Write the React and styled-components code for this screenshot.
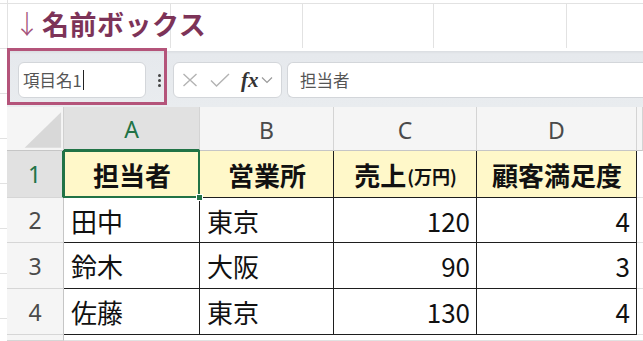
import React from 'react'
import styled, { createGlobalStyle } from 'styled-components'

const GlobalStyle = createGlobalStyle`
  html, body {
    margin: 0;
    padding: 0;
    background: #fff;
  }
  body {
    font-family: "Noto Sans CJK JP", "Noto Sans", sans-serif;
  }
`

const columns = ['A', 'B', 'C', 'D']

const rows = [
  { n: 2, cells: ['田中', '東京', '120', '4'] },
  { n: 3, cells: ['鈴木', '大阪', '90', '3'] },
  { n: 4, cells: ['佐藤', '東京', '130', '4'] },
]

const aligns = ['left', 'left', 'right', 'right']

function App() {
  return (
    <>
      <GlobalStyle />
      <Page>
        <TitleBar>
          <Arrow>↓</Arrow>
          <Title>名前ボックス</Title>
        </TitleBar>

        <Sheet>
          <FormulaBar>
            <Highlight>
              <NameBox>
                項目名1<Caret />
              </NameBox>
              <Dots>
                <i />
                <i />
                <i />
              </Dots>
            </Highlight>

            <FxGroup>
              <svg width="16" height="14" viewBox="0 0 16 14">
                <path d="M1.5 1 L14.5 13 M14.5 1 L1.5 13" stroke="#b3b3b3" strokeWidth="1.4" fill="none" />
              </svg>
              <svg width="20" height="14" viewBox="0 0 20 14">
                <path d="M1 7.5 L6.5 13 L19 1" stroke="#b3b3b3" strokeWidth="1.4" fill="none" />
              </svg>
              <FxText>fx</FxText>
              <svg width="12" height="8" viewBox="0 0 12 8">
                <path d="M1 1.5 L6 6.5 L11 1.5" stroke="#9a9a9a" strokeWidth="1.2" fill="none" />
              </svg>
            </FxGroup>

            <FormulaInput>担当者</FormulaInput>
          </FormulaBar>

          <Grid>
            <Corner>
              <svg width="57" height="44" viewBox="0 0 57 44">
                <polygon points="55,5 55,41 18,41" fill="#d8d8d8" />
              </svg>
            </Corner>
            {columns.map((c, i) => (
              <ColHead key={c} $active={i === 0}>{c}</ColHead>
            ))}
            <ColHead $blank />

            <RowHead $active>1</RowHead>
            <Cell $head $align="center" $selected>担当者</Cell>
            <Cell $head $align="center">営業所</Cell>
            <Cell $head $align="center">
              売上<Small>(万円)</Small>
            </Cell>
            <Cell $head $align="center">顧客満足度</Cell>
            <EmptyCell />

            {rows.map((r) => (
              <React.Fragment key={r.n}>
                <RowHead>{r.n}</RowHead>
                {r.cells.map((v, i) => (
                  <Cell key={i} $align={aligns[i]}>{v}</Cell>
                ))}
                <EmptyCell />
              </React.Fragment>
            ))}

            <RowHead />
            <EmptyCell />
            <EmptyCell />
            <EmptyCell />
            <EmptyCell />
            <EmptyCell />
          </Grid>
        </Sheet>
      </Page>
    </>
  )
}

export default App

const Page = styled.div`
  width: 643px;
  height: 341px;
  overflow: hidden;
  display: flex;
  flex-direction: column;
  background-color: #fff;
  background-image:
    repeating-linear-gradient(to bottom, transparent 0 3px, #e2e2e2 3px 4px, transparent 4px 45px),
    linear-gradient(to right, transparent 7px, #e2e2e2 7px 8px, transparent 8px);
`

const TitleBar = styled.div`
  height: 48px;
  flex-shrink: 0;
  display: flex;
  align-items: center;
  padding-left: 14px;
  box-sizing: border-box;
  padding-bottom: 2px;
  background-image:
    linear-gradient(to right, transparent 170px, #e2e2e2 170px 171px, transparent 171px),
    linear-gradient(to right, transparent 302px, #e2e2e2 302px 303px, transparent 303px),
    linear-gradient(to right, transparent 433px, #e2e2e2 433px 434px, transparent 434px),
    linear-gradient(to right, transparent 566px, #e2e2e2 566px 567px, transparent 567px);
  background-size: 100% 45px;
  background-position: 0 3px;
  background-repeat: no-repeat;
`

const Arrow = styled.span`
  font-size: 26px;
  color: #a4527a;
  font-weight: 300;
  margin-right: 2px;
  line-height: 1;
`

const Title = styled.h1`
  margin: 0;
  font-size: 27px;
  font-weight: 700;
  color: #7d3358;
  letter-spacing: 0.5px;
  line-height: 1;
`

const Sheet = styled.div`
  margin-left: 7px;
  flex: 1;
  display: flex;
  flex-direction: column;
  min-height: 0;
`

const FormulaBar = styled.div`
  height: 59px;
  flex-shrink: 0;
  display: flex;
  align-items: flex-start;
  background: linear-gradient(#fff 0 3px, #dadde1 3px, #e6e9ed 6px, #e9ecef);
`

const Highlight = styled.div`
  width: 160px;
  height: 57px;
  box-sizing: border-box;
  border: 3px solid #b4547a;
  display: flex;
  align-items: flex-start;
  padding: 11px 0 0 8px;
  flex-shrink: 0;
`

const NameBox = styled.div`
  width: 128px;
  height: 36px;
  box-sizing: border-box;
  background: #fff;
  border: 1px solid #d3d6da;
  border-radius: 6px;
  display: flex;
  align-items: center;
  padding-left: 4px;
  font-size: 16.5px;
  color: #555;
`

const Caret = styled.span`
  display: inline-block;
  width: 1px;
  height: 20px;
  background: #222;
  margin-left: 1px;
`

const Dots = styled.div`
  margin: 12px 0 0 12px;
  display: flex;
  flex-direction: column;
  gap: 2px;

  i {
    width: 3px;
    height: 3px;
    border-radius: 50%;
    background: #444;
  }
`

const FxGroup = styled.div`
  margin: 14px 0 0 6px;
  width: 109px;
  height: 36px;
  box-sizing: border-box;
  background: #fff;
  border: 1px solid #d3d6da;
  border-radius: 6px;
  display: flex;
  align-items: center;
  padding-left: 8px;

  svg:nth-child(2) {
    margin-left: 12px;
  }
  svg:last-child {
    margin-left: 2px;
  }
`

const FxText = styled.span`
  font-family: "Liberation Serif", "DejaVu Serif", serif;
  font-style: italic;
  font-weight: 700;
  font-size: 21px;
  color: #333;
  margin-left: 11px;
  line-height: 1;
`

const FormulaInput = styled.div`
  margin: 14px 0 0 5px;
  flex: 1;
  height: 36px;
  box-sizing: border-box;
  background: #fff;
  border: 1px solid #d3d6da;
  border-right: none;
  border-radius: 6px 0 0 6px;
  display: flex;
  align-items: center;
  padding-left: 12px;
  font-size: 16.5px;
  color: #555;
`

const Grid = styled.div`
  flex: 1;
  display: grid;
  grid-template-columns: 57px 136px 134px 143px 160px 1fr;
  grid-template-rows: 44px 47px 45px 46px 46px 1fr;
  background: #fff;
`

const Corner = styled.div`
  background: #f5f5f5;
  border-right: 1px solid #d0d0d0;
  border-bottom: 1px solid #c6c6c6;
  box-sizing: border-box;
  display: flex;

  svg {
    display: block;
  }
`

const ColHead = styled.div`
  box-sizing: border-box;
  display: flex;
  align-items: center;
  justify-content: center;
  padding-top: 2px;
  background: ${(p) => (p.$active ? '#e1e1e1' : '#f5f5f5')};
  color: ${(p) => (p.$active ? '#217346' : '#4a4a4a')};
  border-right: 1px solid #d4d4d4;
  border-bottom: ${(p) => (p.$active ? '2px solid #217346' : '1px solid #c6c6c6')};
  font-family: "Noto Sans", "Open Sans", sans-serif;
  font-size: 23px;
`

const RowHead = styled.div`
  box-sizing: border-box;
  display: flex;
  align-items: center;
  justify-content: center;
  background: ${(p) => (p.$active ? '#e1e1e1' : '#f5f5f5')};
  color: ${(p) => (p.$active ? '#217346' : '#4a4a4a')};
  border-right: ${(p) => (p.$active ? '2px solid #217346' : '1px solid #c6c6c6')};
  border-bottom: 1px solid #d6d6d6;
  font-family: "Noto Sans", "Open Sans", sans-serif;
  font-size: 23px;
`

const Cell = styled.div`
  position: relative;
  box-sizing: border-box;
  display: flex;
  align-items: center;
  justify-content: ${(p) =>
    p.$align === 'right' ? 'flex-end' : p.$align === 'center' ? 'center' : 'flex-start'};
  padding: 0 6px 0 7px;
  background: ${(p) => (p.$head ? '#fff8c9' : '#fff')};
  font-weight: ${(p) => (p.$head ? 700 : 400)};
  font-size: 26px;
  color: #111;
  border-right: 1px solid #1e1e1e;
  border-bottom: 1px solid #1e1e1e;
  white-space: nowrap;

  ${(p) =>
    p.$selected &&
    `
    &::after {
      content: '';
      position: absolute;
      left: -1px;
      top: -1px;
      right: -1px;
      bottom: -1px;
      border: 2px solid #217346;
    }
    &::before {
      content: '';
      position: absolute;
      right: -4px;
      bottom: -4px;
      width: 5px;
      height: 5px;
      background: #217346;
      border: 1px solid #fff;
      z-index: 2;
    }
  `}
`

const Small = styled.span`
  font-size: 18px;
  font-weight: 700;
  margin-top: 4px;
  margin-left: 1px;
`

const EmptyCell = styled.div`
  box-sizing: border-box;
  border-bottom: 1px solid #e1e1e1;
`
